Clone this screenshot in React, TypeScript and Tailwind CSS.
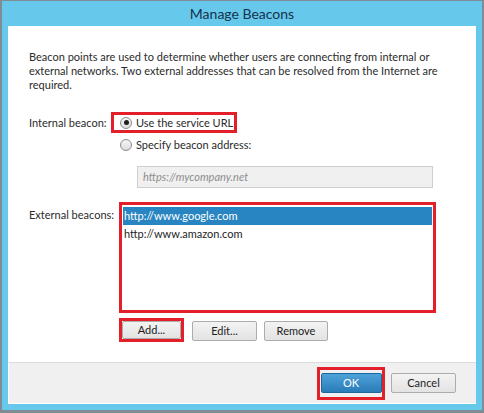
import React from "react";

function Radio({ checked }: { checked?: boolean }) {
  return (
    <span className="w-[12px] h-[12px] rounded-full border border-[#8c8c8c] bg-gradient-to-b from-[#f6f6f6] to-[#dcdcdc] flex items-center justify-center shrink-0">
      {checked && <span className="w-[5px] h-[5px] rounded-full bg-[#1e1e1e]" />}
    </span>
  );
}

function Btn({ children, className = "" }: { children: React.ReactNode; className?: string }) {
  return (
    <div
      className={`h-[20px] border border-[#acacac] rounded-[2px] bg-gradient-to-b from-[#f3f3f3] to-[#e3e3e3] flex items-center justify-center text-[#222] ${className}`}
    >
      {children}
    </div>
  );
}

export default function App() {
  return (
    <div className="w-[484px] h-[413px] bg-[#66c8ea] border-l-2 border-r-2 border-t border-b-[3px] border-[#7f8c94] flex flex-col font-['Lato',sans-serif] text-[11px] text-[#2b2b2b]">
      <div className="h-[25px] shrink-0 flex items-center justify-center text-[14px] text-[#15324d]">
        Manage Beacons
      </div>
      <div className="mx-[6px] flex-1 flex flex-col">
        <div className="h-[336px] bg-white pt-[24px] pl-[21px] leading-[14px]">
          <p>
            Beacon points are used to determine whether users are connecting from internal or
            <br />
            external networks. Two external addresses that can be resolved from the Internet are
            <br />
            required.
          </p>

          <div className="mt-[20px] flex">
            <div className="w-[82px] h-[21px] flex items-center">Internal beacon:</div>
            <div className="flex flex-col">
              <div className="w-[126px] h-[21px] border-[3px] border-[#e3202a] flex items-center pl-[6px] gap-[4px]">
                <Radio checked />
                <span>Use the service URL</span>
              </div>
              <div className="ml-[9px] mt-[4px] h-[16px] flex items-center gap-[4px]">
                <Radio />
                <span>Specify beacon address:</span>
              </div>
              <div className="ml-[26px] mt-[13px] w-[296px] h-[22px] bg-[#f0f0f0] border border-[#cfcfcf] flex items-center pl-[5px] italic text-[#8e8e8e]">
                https://mycompany.net
              </div>
            </div>
          </div>

          <div className="mt-[14px] flex">
            <div className="w-[90px] pt-[6px]">External beacons:</div>
            <div className="w-[317px] h-[111px] border-[3px] border-[#e3202a] px-[1px] pt-[2px]">
              <div className="h-[18px] bg-[#2885c1] text-white flex items-center pl-[1px]">
                http://www.google.com
              </div>
              <div className="h-[18px] flex items-center pl-[1px] text-[#1e1e1e]">
                http://www.amazon.com
              </div>
            </div>
          </div>

          <div className="mt-[5px] ml-[90px] flex items-start">
            <div className="w-[65px] h-[24px] border-[3px] border-[#e3202a]">
              <Btn className="h-full">Add...</Btn>
            </div>
            <Btn className="w-[65px] ml-[8px] mt-[3px]">Edit...</Btn>
            <Btn className="w-[64px] ml-[7px] mt-[3px]">Remove</Btn>
          </div>
        </div>
        <div className="flex-1 border-t border-[#dcdcdc] bg-[#f0f0f0] border-l border-l-white border-b border-b-white flex items-center justify-end pr-[20px]">
          <div className="w-[68px] h-[33px] border-[3px] border-[#e3202a] flex items-center justify-center">
            <div className="w-[61px] h-[20px] rounded-[2px] border border-[#1d679f] bg-gradient-to-b from-[#4da2d9] to-[#2a7cb8] text-white flex items-center justify-center">
              OK
            </div>
          </div>
          <Btn className="w-[65px] ml-[6px]">Cancel</Btn>
        </div>
      </div>
      <div className="h-[6px] shrink-0" />
    </div>
  );
}
